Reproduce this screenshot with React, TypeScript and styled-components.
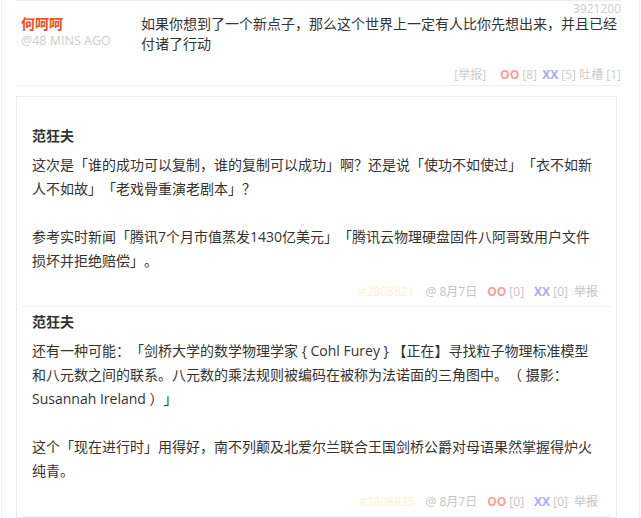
import React from "react";
import styled, { createGlobalStyle } from "styled-components";

const GlobalStyle = createGlobalStyle`
  html, body {
    margin: 0;
    padding: 0;
    background: #fff;
  }
  body {
    font-family: "Open Sans", "Noto Sans CJK SC", sans-serif;
    font-size: 14px;
    color: #333;
    text-spacing-trim: space-all;
  }
`;

type Reply = {
  id: string;
  author: string;
  date: string;
  oo: number;
  xx: number;
  paragraphs: string[];
};

const replies: Reply[] = [
  {
    id: "#2808821",
    author: "范狂夫",
    date: "8月7日",
    oo: 0,
    xx: 0,
    paragraphs: [
      "这次是「谁的成功可以复制，谁的复制可以成功」啊？还是说「使功不如使过」「衣不如新人不如故」「老戏骨重演老剧本」？",
      "参考实时新闻「腾讯7个月市值蒸发1430亿美元」「腾讯云物理硬盘固件八阿哥致用户文件损坏并拒绝赔偿」。"
    ]
  },
  {
    id: "#2808835",
    author: "范狂夫",
    date: "8月7日",
    oo: 0,
    xx: 0,
    paragraphs: [
      "还有一种可能：「剑桥大学的数学物理学家 { Cohl Furey } 【正在】寻找粒子物理标准模型和八元数之间的联系。八元数的乘法规则被编码在被称为法诺面的三角图中。（ 摄影：Susannah Ireland ）」",
      "这个「现在进行时」用得好，南不列颠及北爱尔兰联合王国剑桥公爵对母语果然掌握得炉火纯青。"
    ]
  }
];

const App = () => (
  <>
    <GlobalStyle />
    <Page>
      <Comment>
        <CommentId>3921200</CommentId>
        <Author>
          <AuthorName>何呵呵</AuthorName>
          <AuthorTime>@48 mins ago</AuthorTime>
        </Author>
        <CommentBody>
          <CommentText>
            如果你想到了一个新点子，那么这个世界上一定有人比你先想出来，并且已经付诸了行动
          </CommentText>
          <CommentFooter>
            <Muted>[举报]</Muted>
            <Vote $kind="oo" $gap={14}>OO</Vote> <Muted>[8]</Muted>{" "}
            <Vote $kind="xx" $gap={2}>XX</Vote> <Muted>[5]</Muted>{" "}
            <Muted>吐槽 [1]</Muted>
          </CommentFooter>
        </CommentBody>
      </Comment>

      <TucaoBox>
        {replies.map((r) => (
          <TucaoItem key={r.id}>
            <TucaoAuthor>{r.author}</TucaoAuthor>
            <TucaoContent>
              {r.paragraphs.map((p, i) => (
                <Paragraph key={i}>{p}</Paragraph>
              ))}
            </TucaoContent>
            <TucaoMeta>
              <ReplyId>{r.id}</ReplyId>
              <MetaItem $gap={11}>@ {r.date}</MetaItem>
              <MetaItem $gap={10}>
                <Vote $kind="oo">OO</Vote> [{r.oo}]
              </MetaItem>
              <MetaItem $gap={10}>
                <Vote $kind="xx">XX</Vote> [{r.xx}]
              </MetaItem>
              <MetaItem $gap={6}>举报</MetaItem>
            </TucaoMeta>
          </TucaoItem>
        ))}
      </TucaoBox>
    </Page>
  </>
);

const Page = styled.div`
  box-sizing: border-box;
  width: 639px;
  min-height: 518px;
  margin-left: 1px;
  border-left: 1px solid #eee;
  border-right: 1px solid #eee;
  padding: 0 18px 0 14px;
  overflow: hidden;
`;

const Comment = styled.div`
  position: relative;
  display: flex;
  border-top: 1px solid #eee;
  border-bottom: 1px solid #eee;
  padding: 13px 0 2px 5px;
`;

const CommentId = styled.span`
  position: absolute;
  top: 2px;
  right: 0;
  font-size: 12px;
  line-height: 12px;
  color: #ccc;
`;

const Author = styled.div`
  width: 120px;
  flex-shrink: 0;
`;

const AuthorName = styled.strong`
  display: block;
  font-size: 14px;
  line-height: 19px;
  font-weight: bold;
  color: #f0501c;
`;

const AuthorTime = styled.span`
  display: block;
  font-size: 12.5px;
  line-height: 16px;
  color: #ccc;
  text-transform: uppercase;
`;

const CommentBody = styled.div`
  flex: 1;
  display: flex;
  flex-direction: column;
`;

const CommentText = styled.p`
  margin: 0;
  line-height: 20px;
  color: #333;
`;

const CommentFooter = styled.div`
  margin-top: 13px;
  text-align: right;
  font-size: 12px;
  line-height: 16px;
  color: #ccc;
`;

const Muted = styled.span`
  color: #ccc;
`;

const Vote = styled.span<{ $kind: "oo" | "xx"; $gap?: number }>`
  font-weight: bold;
  margin-left: ${(p) => p.$gap ?? 0}px;
  color: ${(p) => (p.$kind === "oo" ? "#ff9c9c" : "#a9a9ff")};
`;

const TucaoBox = styled.div`
  margin: 10px 4px 0 0;
  border: 1px solid #eaeaea;
  padding: 24px 5px 0;
`;

const TucaoItem = styled.div`
  padding: 3px 10px 4px;
  border-bottom: 1px solid #eee;
`;

const TucaoAuthor = styled.strong`
  display: block;
  font-weight: bold;
  line-height: 24px;
  color: #333;
`;

const TucaoContent = styled.div`
  margin-top: 5px;
`;

const Paragraph = styled.p`
  margin: 0;
  line-height: 24px;
  color: #333;

  & + & {
    margin-top: 24px;
  }
`;

const TucaoMeta = styled.div`
  margin-top: 9px;
  padding-right: 3px;
  display: flex;
  justify-content: flex-end;
  font-size: 12px;
  line-height: 20px;
  color: #c4c4c4;
`;

const ReplyId = styled.span`
  color: #fcf2cc;
`;

const MetaItem = styled.span<{ $gap: number }>`
  margin-left: ${(p) => p.$gap}px;
  white-space: pre;
`;

export default App;
